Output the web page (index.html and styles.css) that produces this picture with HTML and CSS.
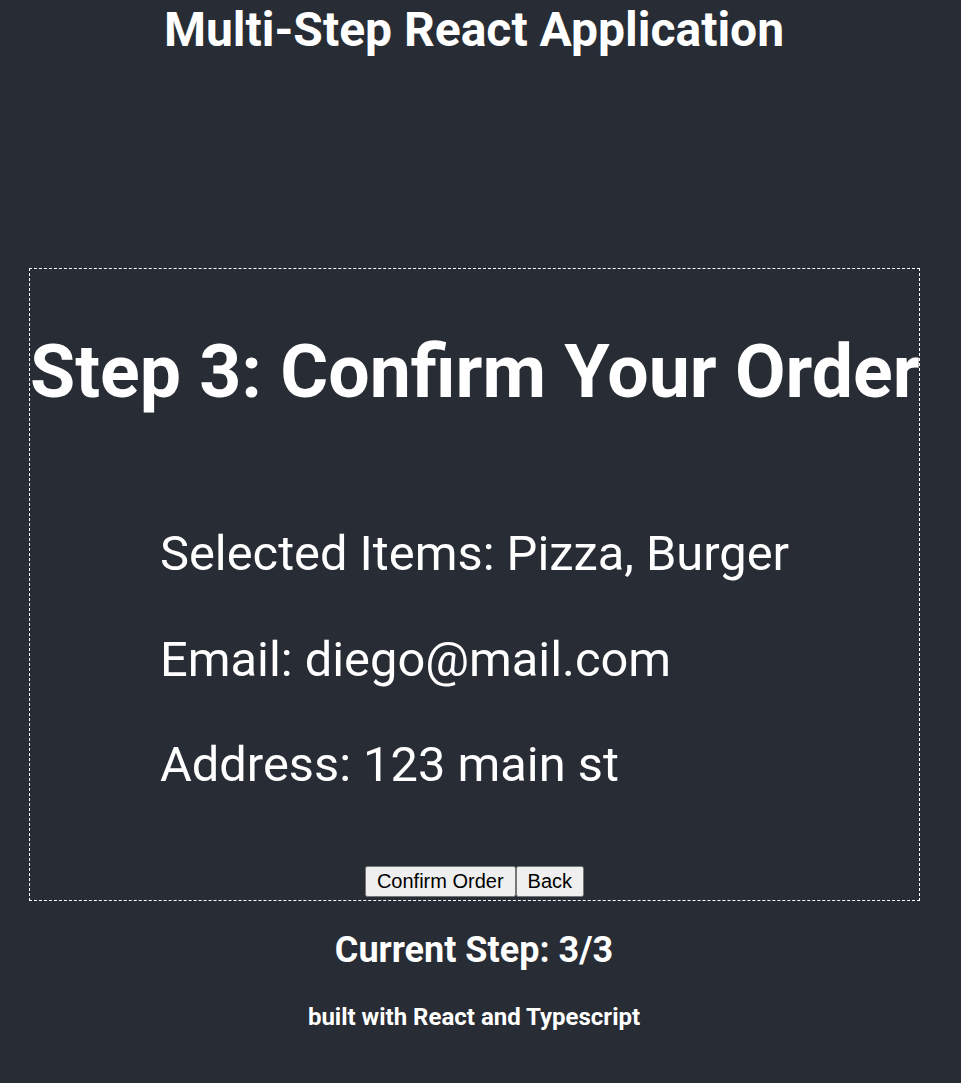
FILE: index.html
```html
<!DOCTYPE html>
<html lang="en">
<head>
<meta charset="utf-8">
<title>Multi-Step React Application</title>
<link rel="stylesheet" href="styles.css">
</head>
<body>
<div class="app">
  <h1 class="app-title">Multi-Step React Application</h1>
  <div class="step-box">
    <h2 class="step-title">Step 3: Confirm Your Order</h2>
    <div class="summary">
      <p class="summary-line">Selected Items: Pizza, Burger</p>
      <p class="summary-line">Email: diego@mail.com</p>
      <p class="summary-line">Address: 123 main st</p>
    </div>
    <div class="actions"><button class="btn">Confirm Order</button><button class="btn">Back</button></div>
  </div>
  <h2 class="current-step">Current Step: 3/3</h2>
  <h3 class="footer-note">built with React and Typescript</h3>
</div>
</body>
</html>
```

FILE: styles.css
```css
html, body {
  margin: 0;
  padding: 0;
  background: #282c34;
}
body {
  color: #ffffff;
  font-family: Roboto, "Noto Sans", sans-serif;
}
.app {
  width: 948px;
  text-align: center;
  min-height: 1083px;
}
.app-title {
  margin: 0;
  padding-top: 2px;
  font-size: 48px;
  font-weight: 700;
  line-height: 56px;
}
.step-box {
  margin: 210px 28px 0 29px;
  border: 1px dashed #ffffff;
  padding-bottom: 3px;
}
.step-title {
  margin: 60px 0 0;
  font-size: 73.4px;
  font-weight: 700;
  line-height: 86px;
  white-space: nowrap;
}
.summary {
  margin-top: 110px;
  padding-left: 130px;
  text-align: left;
}
.summary-line {
  margin: 0 0 48.5px;
  font-size: 48.8px;
  line-height: 57px;
  font-weight: 400;
}
.summary-line:last-child {
  margin-bottom: 0;
}
.actions {
  margin-top: 73px;
  display: flex;
  justify-content: center;
}
.btn {
  font-family: "Liberation Sans", Arial, sans-serif;
  font-size: 20px;
  line-height: 23px;
  padding: 2px 10px;
}
.current-step {
  margin: 28px 0 0;
  font-size: 36px;
  font-weight: 700;
  line-height: 42px;
}
.footer-note {
  margin: 32px 0 0;
  font-size: 24px;
  font-weight: 700;
  line-height: 28px;
}
```
